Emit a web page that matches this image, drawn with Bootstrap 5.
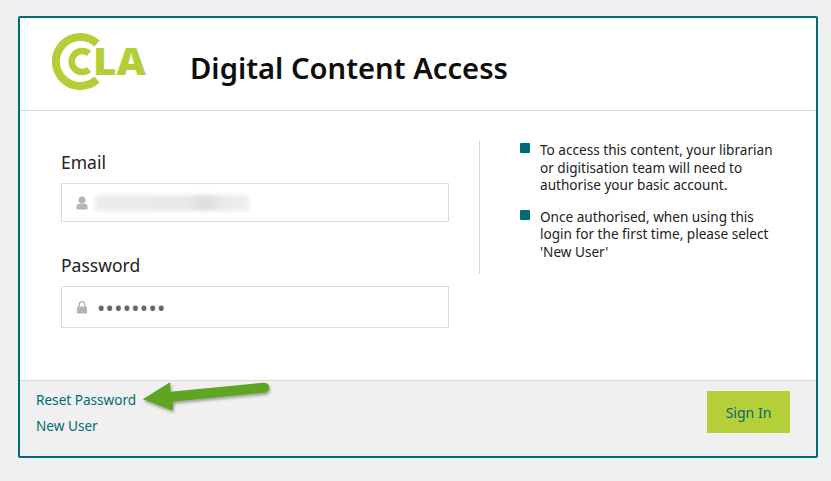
<!DOCTYPE html>
<html lang="en">
<head>
<meta charset="utf-8">
<title>Digital Content Access</title>
<link rel="stylesheet" href="https://cdn.jsdelivr.net/npm/bootstrap@5.3.0/dist/css/bootstrap.min.css">
<style>
html,body{height:100%}
body{background:#f0f0f0;font-family:"Noto Sans",sans-serif;color:#111;padding:16px 13px 0 18px;overflow:hidden}
.login-panel{height:442px;border:2px solid #006b77;border-radius:2px;background:#fff;position:relative}
.login-head{height:93px;border-bottom:1px solid #d9d9d9;padding-left:32px}
.logo-svg{width:96px;height:60px;margin-top:13px;flex:none}
.logo-txt{font-family:"Open Sans",sans-serif;font-weight:800;font-size:37px;fill:#b3cf37}
.login-title{font-size:29.200px;font-weight:600;margin:0 0 0 42px;padding-top:31px;line-height:38px;color:#0d0d0d}
.login-body{height:269px}
.form-side{width:459px;padding:39px 30px 0 41px;flex:none}
.field-label{font-size:17.500px;line-height:24px;margin-bottom:9px;color:#222}
.field-box{border:1px solid #dcdcdc;background:#fff;height:39px;padding-left:14px;margin-bottom:31px}
.field-box.tall{height:42px}
.field-icon{width:12px;height:14px;flex:none;fill:#b4b4b4}
.blurred{width:154px;height:16px;margin:1px 0 0 7px;background:linear-gradient(90deg,#ececec,#e8e8e8 60%,#dcdcdc 72%,#e9e9e9 82%,#efefef);filter:blur(2px)}
.pass-dots{border:0;outline:0;padding:0;margin-left:9px;width:200px;height:24px;line-height:24px;font-size:22px;letter-spacing:.3px;color:#666;background:transparent}
.info-side{height:133px;margin-top:30px;border-left:1px solid #d6d6d6;padding-left:40px;flex:1;padding-right:36px}
.info-list{list-style:none;margin:0;padding:0;font-size:13.600px;line-height:17.500px;color:#222}
.info-list li{display:flex;gap:10px;margin-bottom:14px}
.sq{width:10px;height:10px;background:#006b77;border-radius:1px;flex:none;margin-top:2px}
.login-foot{flex:1;background:#f0f0f0;border-top:1px solid #d9d9d9;padding:10px 26px 0 16px}
.foot-link{display:block;color:#006b77;text-decoration:none;font-size:13.600px;line-height:18px;margin-bottom:8px}
.sign-btn{width:83px;height:42px;border:0;border-radius:0;background:#b4cf37;color:#006b77;font-size:14px;padding:0}
.sign-btn:hover{background:#a8c22f;color:#006b77}
.arrow-svg{position:absolute;left:120px;top:360px;width:136px;height:40px;overflow:visible}
</style>
</head>
<body>
<div class="login-panel d-flex flex-column">
  <div class="login-head d-flex">
    <svg class="logo-svg" viewBox="0 0 96 60" aria-label="CLA logo">
      <path d="M45 12.500A24.500 24.500 0 1 0 45 48.500" fill="none" stroke="#b3cf37" stroke-width="8"/>
      <path d="M37 22.500A10.500 10.500 0 1 0 37 38.500" fill="none" stroke="#b3cf37" stroke-width="6.500"/>
      <text class="logo-txt" x="41" y="43.500" textLength="53" lengthAdjust="spacingAndGlyphs">LA</text>
    </svg>
    <h1 class="login-title">Digital Content Access</h1>
  </div>
  <div class="login-body d-flex">
    <form class="form-side">
      <div class="field-label">Email</div>
      <div class="field-box d-flex align-items-center">
        <svg class="field-icon" viewBox="0 0 12 14"><circle cx="6" cy="4" r="3.500"/><path d="M0.500 13.500V10.500Q0.500 7.800 4 7.800H8Q11.500 7.800 11.500 10.500V13.500Z"/></svg>
        <div class="blurred"></div>
      </div>
      <div class="field-label">Password</div>
      <div class="field-box tall d-flex align-items-center">
        <svg class="field-icon" viewBox="0 0 12 14"><path d="M1 6.500H11V13.500H1Z"/><path d="M3.300 6.500V4.300a2.700 2.700 0 0 1 5.400 0V6.500" fill="none" stroke="#b4b4b4" stroke-width="1.300"/></svg>
        <input class="pass-dots" type="password" value="password" aria-label="Password" readonly>
      </div>
    </form>
    <div class="info-side">
      <ul class="info-list">
        <li><span class="sq"></span><span>To access this content, your librarian or digitisation team will need to authorise your basic account.</span></li>
        <li><span class="sq"></span><span>Once authorised, when using this login for the first time, please select 'New User'</span></li>
      </ul>
    </div>
  </div>
  <div class="login-foot d-flex justify-content-between align-items-start">
    <div>
      <a class="foot-link" href="#">Reset Password</a>
      <a class="foot-link" href="#">New User</a>
    </div>
    <button class="btn sign-btn" type="button">Sign In</button>
  </div>
  <svg class="arrow-svg" viewBox="0 0 136 40">
    <defs><filter id="ashadow" x="-10%" y="-30%" width="120%" height="170%"><feDropShadow dx="1" dy="2" stdDeviation="1.500" flood-color="#000" flood-opacity=".35"/></filter></defs>
    <path d="M2.700 21.300L30 4.300L30.700 13.700L123 4.700Q129.300 4.700 129.300 9.300Q129.300 14 125 14.700L33.300 23.700L32.700 32.700Z" fill="#5fa524" filter="url(#ashadow)"/>
  </svg>
</div>
<script src="https://cdn.jsdelivr.net/npm/bootstrap@5.3.0/dist/js/bootstrap.bundle.min.js"></script>
</body>
</html>
